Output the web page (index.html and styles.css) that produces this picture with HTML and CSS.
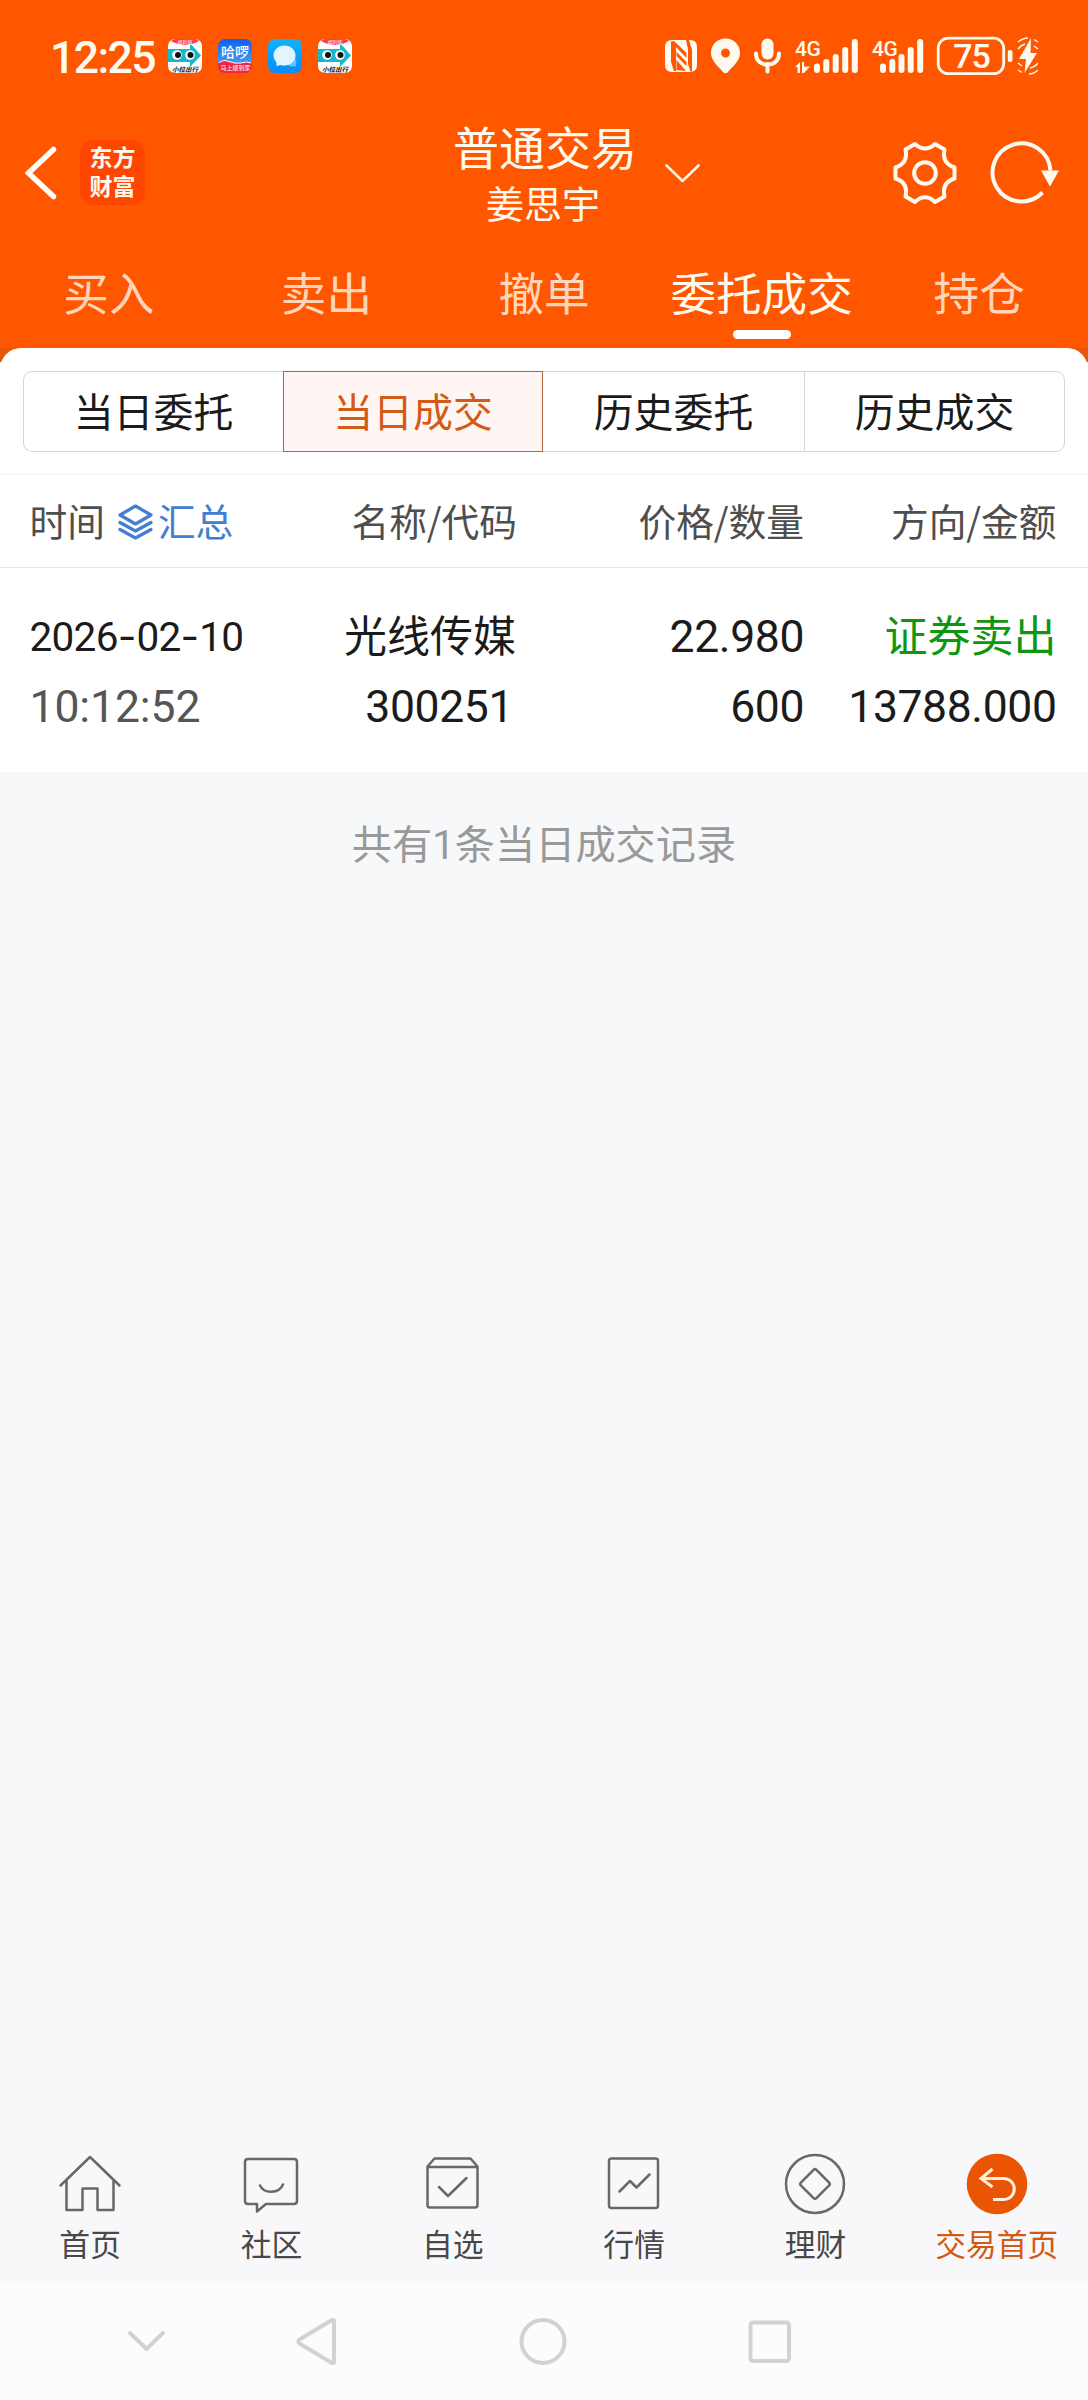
FILE: index.html
```html
<!DOCTYPE html>
<html lang="zh-CN">
<head>
<meta charset="utf-8">
<title>普通交易</title>
<link rel="stylesheet" href="styles.css">
</head>
<body>
<header class="top">
  <div class="status">
    <span class="clock">12:25</span>
    <div class="notices">
      <svg width="34" height="34" viewBox="0 0 34 34">
        <rect width="34" height="34" rx="7" fill="#fff"/>
        <path d="M3 2Q5 0 8 0H26Q29 0 31 2Q24 6 17 6T3 2Z" fill="#f7395b"/>
        <path d="M0 10H22V4L33 16.500L22 28V23H0Z" fill="#15b9cb"/>
        <circle cx="9" cy="16" r="4.800" fill="#fff"/><circle cx="22" cy="16" r="4.800" fill="#fff"/>
        <circle cx="10" cy="16" r="3" fill="#111"/><circle cx="22.500" cy="16" r="3" fill="#111"/>
        <text x="17" y="4.600" class="ride-tag">福利版</text>
        <text x="17" y="32.500" class="ride-name">小拉出行</text>
      </svg>
      <svg width="34" height="34" viewBox="0 0 34 34">
        <defs><linearGradient id="sky" x2="0" y2="1"><stop offset="0" stop-color="#0b62ee"/><stop offset=".75" stop-color="#4a9cf0"/></linearGradient></defs>
        <rect width="34" height="34" rx="7" fill="url(#sky)"/>
        <path d="M0 24Q5 20 11 22.500T23 24Q29 22 34 24V27Q34 34 27 34H7Q0 34 0 27Z" fill="#f0263f"/>
        <path d="M1 24Q5 20 11 22.500T23 24Q29 22 33 24" fill="none" stroke="#fff" stroke-width="1"/>
        <text x="17" y="18" class="app-name">哈啰</text>
        <text x="17.500" y="31" class="app-note">马上顺到家</text>
      </svg>
      <svg width="34" height="34" viewBox="0 0 34 34">
        <defs><linearGradient id="msg" x2="0" y2="1"><stop offset="0" stop-color="#12b2fb"/><stop offset="1" stop-color="#078cf8"/></linearGradient></defs>
        <rect width="34" height="34" rx="7" fill="url(#msg)"/>
        <circle cx="24" cy="23" r="4.500" fill="#69c0ff"/><path d="M25 26h3v2Z" fill="#69c0ff"/>
        <path d="M16.500 6.500C23 6.500 27.500 11 27.500 16.500S23 26.500 16.500 26.500Q14 26.500 12.500 26L8.500 27V23.500Q5.500 20.500 5.500 16.500C5.500 11 10 6.500 16.500 6.500Z" fill="#e2f5ff"/>
      </svg>
      <svg width="34" height="34" viewBox="0 0 34 34">
        <rect width="34" height="34" rx="7" fill="#fff"/>
        <path d="M3 2Q5 0 8 0H26Q29 0 31 2Q24 6 17 6T3 2Z" fill="#f7395b"/>
        <path d="M0 10H22V4L33 16.500L22 28V23H0Z" fill="#15b9cb"/>
        <circle cx="9" cy="16" r="4.800" fill="#fff"/><circle cx="22" cy="16" r="4.800" fill="#fff"/>
        <circle cx="10" cy="16" r="3" fill="#111"/><circle cx="22.500" cy="16" r="3" fill="#111"/>
        <text x="17" y="4.600" class="ride-tag">福利版</text>
        <text x="17" y="32.500" class="ride-name">小拉出行</text>
      </svg>
    </div>
    <svg class="indicators" width="376" height="42" viewBox="664 35 376 42" fill="#fffaf0">
      <path fill-rule="evenodd" d="M672 40H690Q697 40 697 47V65Q697 72 690 72H672Q665 72 665 65V47Q665 40 672 40ZM671 41.500V62L674 71H676V47L686.500 58V53L674 41ZM676.500 52V56L686.500 66V62ZM676.500 60V70L686 71ZM686 40L688 49V64L690.500 71.500H692V50L689 40Z"/>
      <path fill-rule="evenodd" d="M725.500 38.500C734 38.500 740 45 740 53C740 61 732 67 728 72Q725.500 74.500 723 72C719 67 711 61 711 53C711 45 717 38.500 725.500 38.500ZM725.500 48.500A4.500 4.500 0 1 0 725.500 57.500A4.500 4.500 0 1 0 725.500 48.500Z"/>
      <rect x="761.500" y="38.500" width="12" height="21" rx="6"/>
      <path d="M756 53.500C756 61 761 64.500 767.500 64.500S779 61 779 53.500M767.500 64V71.500" fill="none" stroke="#fffaf0" stroke-width="4" stroke-linecap="round"/>
      <text x="795" y="55.500" class="net">4G</text>
      <path d="M795 67L800 62V73H797.500V67ZM802 62L804 62V66.500H810L804 73H802Z"/>
      <path d="M817 66.500V70M826.300 62V70M835.700 57V70M845.200 50V70M854.800 42V70M883 66.500V70M892.300 62V70M901.500 57V70M910.700 50V70M920.200 42V70" stroke="#fffaf0" stroke-width="6" stroke-linecap="round"/>
      <text x="872" y="55.500" class="net">4G</text>
      <rect x="938.200" y="38.200" width="65.500" height="35.500" rx="10" fill="none" stroke="#fffaf0" stroke-width="2.800"/>
      <text x="971.500" y="68" class="charge">75</text>
      <rect x="1007.800" y="50" width="4.700" height="12" rx="2"/>
      <path d="M1031 38L1019 59H1026L1024.500 73L1037 53H1030.500Z"/>
      <path d="M1018 42Q1023 38 1028 38M1018 49Q1021 45 1025 44M1034 39.500L1038 42M1034 46L1038 49M1018 63L1022 66M1018 70L1022 72.500M1029 74Q1034 74 1038 70M1030 68Q1035 67 1038 63" fill="none" stroke="#fffaf0" stroke-width="1.400"/>
    </svg>
  </div>

  <div class="titlebar">
    <svg width="32" height="56" viewBox="25 145 32 56" fill="none" stroke="#fffdf5" stroke-width="5.500" stroke-linecap="round"><path d="M53.500 149.500L28.500 173L53.500 196.500"/></svg>
    <div class="brand">东方<br>财富</div>
    <div class="heading">
      <h1>普通交易</h1>
      <p>姜思宇</p>
    </div>
    <svg class="drop" width="37" height="20" viewBox="664 162 37 20" fill="none" stroke="#fff2e2" stroke-width="2.600" stroke-linecap="round" stroke-linejoin="round"><path d="M666.500 164.500L682.500 180L698.500 164.500"/></svg>
    <svg class="gear" width="66" height="64" viewBox="892 140.500 66 64" fill="none" stroke="#fffaf0" stroke-width="4" stroke-linejoin="round">
      <path d="M915 143.500Q925 152.500 935 143.500L944.500 149Q941.500 162.500 954.500 167V178Q941.500 182 944.500 196L935 201.500Q925 192 915 201.500L905.500 196Q908.500 182 895.500 178V167Q908.500 162.500 905.500 149Z"/>
      <circle cx="925" cy="172.500" r="10.800"/>
    </svg>
    <svg width="70" height="64" viewBox="990 140.500 70 64"><path d="M1050.500 170A29 29 0 1 0 1042.500 192" fill="none" stroke="#fffaf0" stroke-width="4"/><path d="M1041 170H1059L1050 186Z" fill="#fffaf0"/></svg>
  </div>

  <nav class="tabs">
    <a>买入</a><a>卖出</a><a>撤单</a><a class="on">委托成交</a><a>持仓</a>
  </nav>
</header>

<main>
  <div class="lip"></div>
  <div class="panel">
    <div class="segments">
      <button>当日委托</button><button class="on">当日成交</button><button>历史委托</button><button>历史成交</button>
    </div>
    <div class="cols head">
      <div class="when">时间
        <svg width="35" height="36" viewBox="0 0 35 36" fill="none" stroke="#4280cf" stroke-width="3.200" stroke-linecap="round" stroke-linejoin="round"><path d="M17.500 2L33 11L17.500 20L2 11ZM2 18.500L17.500 27L33 18.500M2 25.500L17.500 34L33 25.500"/></svg><span>汇总</span>
      </div>
      <div>名称/代码</div><div>价格/数量</div><div>方向/金额</div>
    </div>
    <div class="trade">
      <div class="cols">
        <div class="date">2026<i>-</i>02<i>-</i>10</div><div class="name">光线传媒</div><div>22.980</div><div class="sell">证券卖出</div>
      </div>
      <div class="cols">
        <div class="time">10:12:52</div><div class="code">300251</div><div>600</div><div>13788.000</div>
      </div>
    </div>
  </div>
  <p class="total">共有1条当日成交记录</p>
</main>

<nav class="bottom">
  <a><svg width="66" height="64" viewBox="57 2152 66 64"><path d="M60.500 2185.500L90 2157L119.500 2185.500M66.500 2180.500V2210H82.500V2188.500H97.500V2210H113.500V2180.500"/></svg>首页</a>
  <a><svg width="66" height="64" viewBox="238 2152 66 64"><path d="M248 2159H294Q297 2159 297 2162V2201Q297 2204 294 2204H266L257 2211.500V2204H248Q245 2204 245 2201V2162Q245 2159 248 2159ZM260 2185.500C264 2194 279 2194 283 2184.500"/></svg>社区</a>
  <a><svg width="66" height="64" viewBox="419.500 2152 66 64"><path d="M427 2166.500L434 2158.500H470L477 2166.500V2205Q477 2207.500 474.500 2207.500H429.500Q427 2207.500 427 2205ZM427 2167H477M438.500 2187L447.500 2196L466 2178"/></svg>自选</a>
  <a><svg width="66" height="64" viewBox="600.500 2152 66 64"><rect x="608.500" y="2158.500" width="49" height="49.500" rx="2.500"/><path d="M619 2191.500L629.500 2181L636 2187.500L649 2174.500"/></svg>行情</a>
  <a><svg width="66" height="64" viewBox="782 2152 66 64"><circle cx="815" cy="2184" r="29"/><rect x="804" y="2173" width="22" height="22" rx="2" transform="rotate(45 815 2184)"/></svg>理财</a>
  <a class="on"><svg width="66" height="64" viewBox="964 2152 66 64"><circle class="disc" cx="997" cy="2184" r="30.300"/><path class="arrow" d="M992.500 2169L981 2178.500L992.500 2187M982 2178.500H1003C1018 2178.500 1018 2199.500 1003 2199.500H993"/></svg>交易首页</a>
</nav>

<footer class="system">
  <svg width="40" height="50" viewBox="126 2316 40 50"><path d="M130 2333L146.500 2349L163 2333"/></svg>
  <svg width="44" height="50" viewBox="294 2316 44 50"><path d="M332 2320Q334 2319 334 2321.500V2361.500Q334 2364 332 2363L299.500 2343.500Q297 2341.500 299.500 2339.500Z"/></svg>
  <svg width="50" height="50" viewBox="518 2316 50 50"><circle cx="543" cy="2341.500" r="21.500"/></svg>
  <svg width="46" height="50" viewBox="746 2316 46 50"><rect x="750.500" y="2322.500" width="38.500" height="38.500" rx="2.500"/></svg>
</footer>
</body>
</html>
```
FILE: styles.css
```css
* { box-sizing: border-box; }
body {
  margin: 0;
  height: 2400px;
  display: flex;
  flex-direction: column;
  background: #f7f8fa;
  color: #1b1b1b;
  font-family: "Noto Sans CJK SC", "Noto Sans", sans-serif;
}
h1, p { margin: 0; font-weight: 400; }
svg { display: block; flex: none; }

.top { height: 348px; background: #ff5600; color: #fffaf0; }

.status { height: 112px; display: flex; align-items: center; padding-left: 50px; }
.clock { width: 118px; font: 500 44.500px/60px Roboto, sans-serif; letter-spacing: -1.600px; padding-top: 3px; }
.notices { display: flex; gap: 16px; }
.indicators { margin-left: 312px; }
.app-name { font-size: 14px; fill: #fff; text-anchor: middle; font-weight: 500; }
.app-note { font-size: 6px; fill: #fff; text-anchor: middle; }
.ride-tag { font-size: 5px; fill: #fff; text-anchor: middle; }
.ride-name { font-size: 6.500px; font-weight: 700; font-style: italic; fill: #111; text-anchor: middle; }
.net { font: 500 21px Roboto, sans-serif; letter-spacing: -.5px; }
.charge { font: 500 34px Roboto, sans-serif; text-anchor: middle; letter-spacing: -1px; }

.titlebar { height: 121px; display: flex; align-items: center; padding-left: 25px; }
.brand {
  width: 65px; height: 65px; margin-left: 23px; padding-top: 2px;
  border-radius: 13px; background: #ff4600; text-align: center;
  font-size: 23px; line-height: 29px; font-weight: 700;
}
.heading { width: 180px; margin: -2px 0 0 308px; text-align: center; white-space: nowrap; }
.heading h1 { font-size: 46px; line-height: 60px; }
.heading p { font-size: 38px; line-height: 54px; }
.drop { margin-left: 31px; }
.gear { margin: 0 32px 0 191px; }

.tabs { height: 115px; display: grid; grid-template-columns: repeat(5, 1fr); }
.tabs a {
  display: flex; flex-direction: column; align-items: center;
  padding-top: 25px; font-size: 45.600px; line-height: 66px; color: #ffd6bc;
}
.tabs .on { color: #fffaf0; }
.tabs .on::after { content: ""; width: 58px; height: 9px; margin-top: 6px; border-radius: 4.500px; background: #fff; }

main { flex: 1; }
.lip { height: 14px; margin-bottom: -14px; background: #e55607; }
.panel { position: relative; height: 424px; background: #fff; border-radius: 21px 21px 0 0; padding-top: 23px; }
.segments { display: grid; grid-template-columns: 260px 260px 261px 261px; margin: 0 23px; height: 81px; }
.segments button {
  border: 1px solid #d3d6d6; border-right-width: 0; background: #fff; padding: 0 0 3px;
  font: 400 39.900px/56px "Noto Sans CJK SC", sans-serif; color: #1b1b1b;
}
.segments button:first-child { border-radius: 9px 0 0 9px; }
.segments button:last-child { border-radius: 0 9px 9px 0; border-right-width: 1px; }
.segments .on { border: 1px solid #b0643f; background: #fff6f3; color: #d35a14; }
.segments .on + button { border-left: 0; }

.cols {
  display: grid; grid-template-columns: 170px 317.500px 287px 252.500px;
  padding-left: 29.500px; text-align: right; white-space: nowrap;
}
.cols > :first-child { text-align: left; }
.head {
  height: 94px; margin-top: 22px; align-items: center; padding-bottom: 3px;
  border-top: 1px solid #f4f4f4; border-bottom: 1px solid #e7e8e8;
  font-size: 37.700px; color: #4e4e4e;
}
.when { display: flex; align-items: center; }
.when svg { margin: 5px 5px 0 13px; }
.when span { color: #4280cf; }

.trade { padding-top: 34px; font-family: Roboto, sans-serif; font-size: 44.500px; letter-spacing: -.4px; }
.trade .cols { height: 70px; line-height: 70px; }
.date { font-size: 40.500px; letter-spacing: -.7px; }
.date i { font-family: Inter, sans-serif; font-style: normal; letter-spacing: 0; }
.time { color: #555; letter-spacing: -.1px; }
.name, .sell { font: 400 43px/63px "Noto Sans CJK SC", sans-serif; letter-spacing: 0; }
.name { padding-right: 1px; }
.sell { color: #0f960f; }
.code { padding-right: 4px; }

.total { margin-top: 44px; text-align: center; font: 400 40.200px/60px Roboto, "Noto Sans CJK SC", sans-serif; color: #999; }

.bottom { height: 131px; background: #f8f8fb; display: grid; grid-template-columns: repeat(6, 1fr); }
.bottom a { display: flex; flex-direction: column; align-items: center; font-size: 30.800px; line-height: 54px; color: #484848; margin-right: 1px; }
.bottom svg { fill: none; stroke: #686868; stroke-width: 2.500; stroke-linecap: round; stroke-linejoin: round; }
.bottom .on { color: #d35a14; }
.bottom .disc { fill: #e95504; stroke: none; }
.bottom .arrow { stroke: #fff0dc; stroke-width: 3; stroke-linecap: butt; stroke-linejoin: miter; }

.system { height: 117px; display: flex; align-items: flex-start; padding: 33px 0 0 126px; background: #fcfcfc; }
.system svg { fill: none; stroke: #d2d2d2; stroke-width: 4; stroke-linecap: round; stroke-linejoin: round; }
.system svg:nth-child(2) { margin-left: 128px; }
.system svg:nth-child(3) { margin-left: 180px; }
.system svg:nth-child(4) { margin-left: 178px; }
```
